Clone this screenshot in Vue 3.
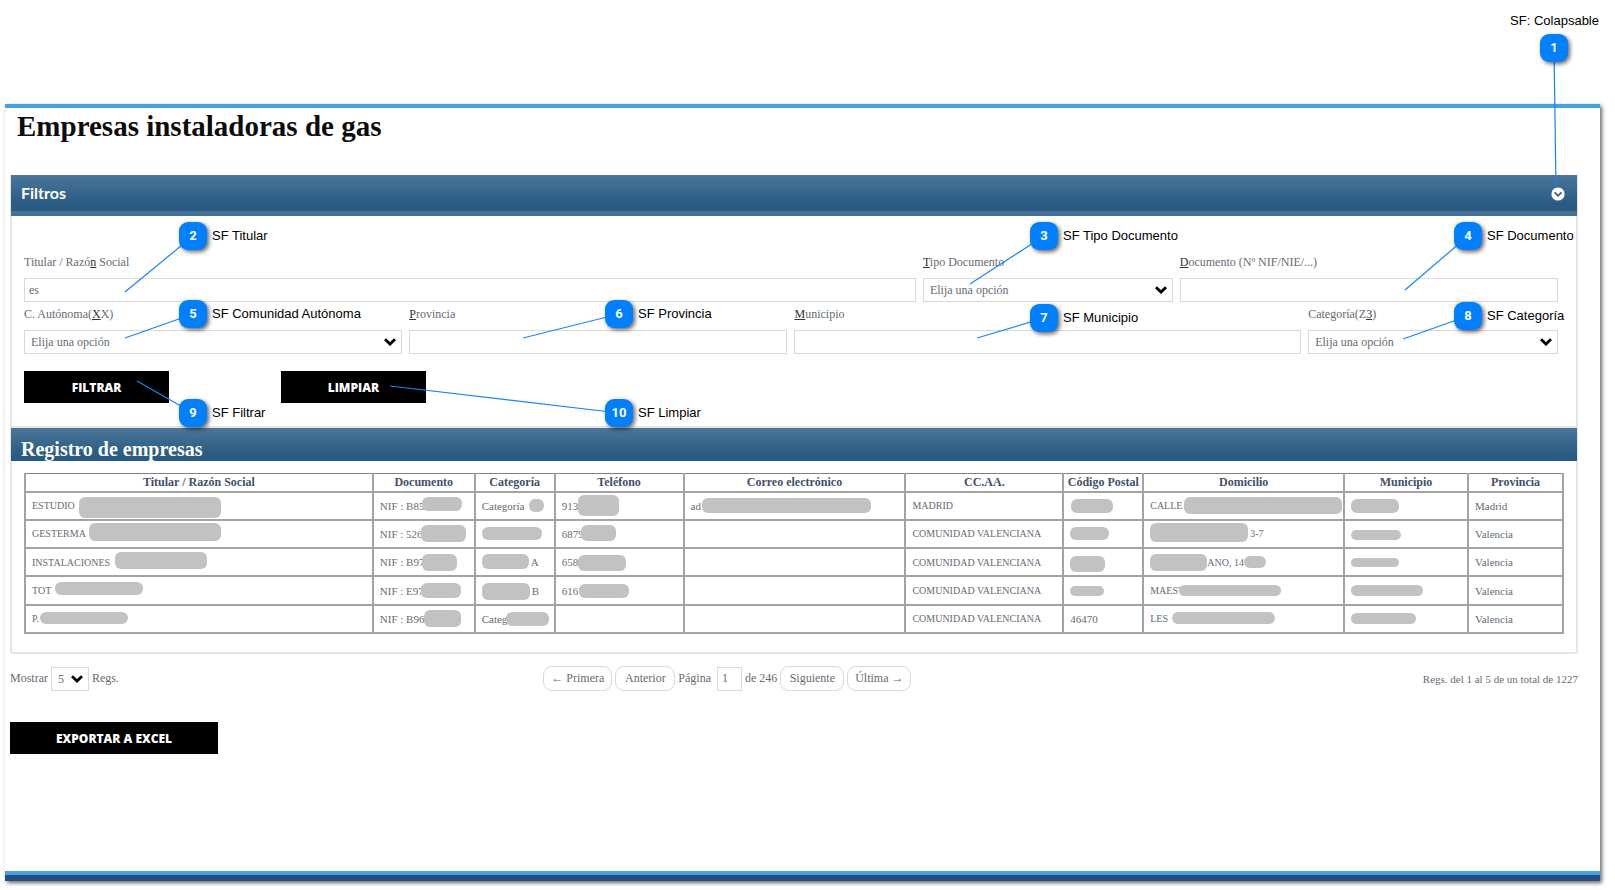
<script setup>
import { ref } from 'vue'

const titular = ref('es')
const documento = ref('')
const provincia = ref('')
const municipio = ref('')
const pagina = ref('1')

const columns = [
  { name: 'Titular / Razón Social', w: 348, caps: true },
  { name: 'Documento', w: 102 },
  { name: 'Categoría', w: 80 },
  { name: 'Teléfono', w: 129 },
  { name: 'Correo electrónico', w: 222 },
  { name: 'CC.AA.', w: 158, caps: true },
  { name: 'Código Postal', w: 80 },
  { name: 'Domicilio', w: 201, caps: true },
  { name: 'Municipio', w: 124 },
  { name: 'Provincia', w: 95 },
]
const total = columns.reduce((sum, c) => sum + c.w, 0)

// A cell is plain text, or a lead text followed by a hidden part:
// at = start of the hidden part, w/h = its size, dy = vertical shift, tail = text after it.
const m = (text, at, w, h, dy = 0, tail = '', extra = 0) => ({ text, at, w, h, dy, tail, extra })
const t = (text) => ({ text })

const rows = [
  [m('ESTUDIO', 53, 142, 21, 2), m('NIF : B85', 48, 40, 14, -2), m('Categoría', 53, 15, 13), m('913', 22, 41, 21), m('ad', 17, 169, 15), t('MADRID'), m('', 7, 42, 14), m('CALLE', 40, 158, 17), m('', 5, 48, 14), t('Madrid')],
  [m('GESTERMA', 63, 132, 18, -2), m('NIF : 526', 47, 45, 17), m('', 6, 60, 13), m('6879', 25, 35, 16, -1), t(''), t('COMUNIDAD VALENCIANA'), m('', 6, 39, 13), m('', 4, 98, 19, -1, '3-7'), m('', 6, 50, 10, 1), t('Valencia')],
  [m('INSTALACIONES', 89, 92, 17, -2), m('NIF : B971', 48, 35, 17), m('', 5, 47, 15, -1, 'A'), m('658', 22, 48, 16, 1), t(''), t('COMUNIDAD VALENCIANA'), m('', 6, 35, 16, 2), m('', 5, 57, 17, 0, 'ANO, 14', 22), m('', 5, 48, 9), t('Valencia')],
  [m('TOT', 29, 88, 13, -2), m('NIF : E97', 47, 40, 15), m('', 4, 48, 17, 1, 'B'), m('616', 23, 50, 14), t(''), t('COMUNIDAD VALENCIANA'), m('', 6, 34, 10), m('MAEST', 35, 102, 11), m('', 4, 72, 11), t('Valencia')],
  [m('P.', 14, 88, 12, -1), m('NIF : B964', 50, 37, 17), m('Categ', 30, 43, 14), t(''), t(''), t('COMUNIDAD VALENCIANA'), t('46470'), m('LES', 28, 103, 12, -1), m('', 5, 65, 11), t('Valencia')],
]

const W = 1615
const H = 890
const pct = (x) => (x / W) * 100 + '%'

// Callouts: x/y = centre of the badge, tx/ty = the point it refers to.
const callouts = [
  { n: 1, text: 'SF: Colapsable', x: 1554, y: 48, tx: 1556, ty: 188, above: true },
  { n: 2, text: 'SF Titular', x: 193, y: 236, tx: 125, ty: 292 },
  { n: 3, text: 'SF Tipo Documento', x: 1044, y: 236, tx: 970, ty: 284 },
  { n: 4, text: 'SF Documento', x: 1468, y: 236, tx: 1405, ty: 290 },
  { n: 5, text: 'SF Comunidad Autónoma', x: 193, y: 314, tx: 125, ty: 338 },
  { n: 6, text: 'SF Provincia', x: 619, y: 314, tx: 523, ty: 338 },
  { n: 7, text: 'SF Municipio', x: 1044, y: 318, tx: 977, ty: 338 },
  { n: 8, text: 'SF Categoría', x: 1468, y: 316, tx: 1403, ty: 339 },
  { n: 9, text: 'SF Filtrar', x: 193, y: 413, tx: 137, ty: 381 },
  { n: 10, text: 'SF Limpiar', x: 619, y: 413, tx: 390, ty: 386 },
]
</script>

<template>
  <div class="page">
    <main class="sheet">
      <h1>Empresas instaladoras de gas</h1>

      <section class="panel filters">
        <header class="bar bar-filters">
          <h2>Filtros</h2>
          <button type="button" class="collapse" aria-label="Colapsar filtros">
            <svg viewBox="0 0 14 14" width="14" height="14">
              <circle cx="7" cy="7" r="6.6" fill="#fff" />
              <path d="M3.6 5.4 7 8.8 10.4 5.4" fill="none" stroke="#2f6088" stroke-width="1.8" />
            </svg>
          </button>
        </header>
        <form class="form" @submit.prevent>
          <div class="field c7">
            <label for="titular">Titular / Razó<u>n</u> Social</label>
            <input id="titular" v-model="titular" type="text" />
          </div>
          <div class="field c2">
            <label for="tipo"><u>T</u>ipo Documento</label>
            <span class="select">
              <select id="tipo"><option>Elija una opción</option></select>
              <svg viewBox="0 0 12 8" width="12" height="8"><path d="M1 1.2 6 6 11 1.2" /></svg>
            </span>
          </div>
          <div class="field c3">
            <label for="documento"><u>D</u>ocumento (Nº NIF/NIE/...)</label>
            <input id="documento" v-model="documento" type="text" />
          </div>
          <div class="field c3">
            <label for="ccaa">C. Autónoma(<u>X</u>X)</label>
            <span class="select">
              <select id="ccaa"><option>Elija una opción</option></select>
              <svg viewBox="0 0 12 8" width="12" height="8"><path d="M1 1.2 6 6 11 1.2" /></svg>
            </span>
          </div>
          <div class="field c3">
            <label for="provincia"><u>P</u>rovincia</label>
            <input id="provincia" v-model="provincia" type="text" />
          </div>
          <div class="field c4">
            <label for="municipio"><u>M</u>unicipio</label>
            <input id="municipio" v-model="municipio" type="text" />
          </div>
          <div class="field c2">
            <label for="categoria">Categoría(Z<u>3</u>)</label>
            <span class="select">
              <select id="categoria"><option>Elija una opción</option></select>
              <svg viewBox="0 0 12 8" width="12" height="8"><path d="M1 1.2 6 6 11 1.2" /></svg>
            </span>
          </div>
          <div class="action c2"><button type="submit" class="black">FILTRAR</button></div>
          <div class="action c2"><button type="reset" class="black">LIMPIAR</button></div>
        </form>
      </section>

      <section class="panel results">
        <header class="bar bar-results"><h2>Registro de empresas</h2></header>
        <div class="table-box">
          <table>
            <colgroup>
              <col v-for="c in columns" :key="c.name" :style="{ width: (c.w / total) * 100 + '%' }" />
            </colgroup>
            <thead>
              <tr><th v-for="c in columns" :key="c.name" scope="col">{{ c.name }}</th></tr>
            </thead>
            <tbody>
              <tr v-for="(row, i) in rows" :key="i">
                <td v-for="(cell, j) in row" :key="j" :class="{ caps: columns[j].caps }">
                  <div class="cell">
                    <span class="lead" :style="cell.w ? { width: cell.at + 'px' } : null">{{ cell.text }}</span>
                    <span
                      v-if="cell.w"
                      class="mask"
                      :style="{ width: cell.w + 'px', height: cell.h + 'px', marginTop: cell.dy * 2 + 'px' }"
                    ></span>
                    <span v-if="cell.tail" class="tail" :class="{ tight: cell.extra }">{{ cell.tail }}</span>
                    <span v-if="cell.extra" class="mask small" :style="{ width: cell.extra + 'px' }"></span>
                  </div>
                </td>
              </tr>
            </tbody>
          </table>
        </div>
      </section>

      <div class="pager">
        <div class="page-size">
          <label for="regs">Mostrar</label>
          <span class="select mini">
            <select id="regs"><option>5</option></select>
            <svg viewBox="0 0 12 8" width="12" height="8"><path d="M1 1.2 6 6 11 1.2" /></svg>
          </span>
          <span>Regs.</span>
        </div>
        <nav class="pages" aria-label="Paginación">
          <button type="button" class="pill wide">← Primera</button>
          <button type="button" class="pill">Anterior</button>
          <label for="pagina">Página</label>
          <input id="pagina" v-model="pagina" type="text" />
          <span>de 246</span>
          <button type="button" class="pill mid">Siguiente</button>
          <button type="button" class="pill mid">Última →</button>
        </nav>
        <div class="summary">Regs. del 1 al 5 de un total de 1227</div>
      </div>

      <button type="button" class="black export">EXPORTAR A EXCEL</button>
    </main>

    <div class="callouts">
      <svg class="lines" :viewBox="`0 0 ${W} ${H}`" preserveAspectRatio="none">
        <line v-for="c in callouts" :key="c.n" :x1="c.x" :y1="c.y" :x2="c.tx" :y2="c.ty" />
      </svg>
      <div
        v-for="c in callouts"
        :key="c.n"
        class="callout"
        :class="{ above: c.above }"
        :style="{ left: pct(c.x), top: c.y + 'px' }"
      >
        <span class="badge">{{ c.n }}</span>
        <span class="note">{{ c.text }}</span>
      </div>
    </div>
  </div>
</template>

<style>
body {
  background: #fff;
}
</style>

<style scoped>
* {
  box-sizing: border-box;
}
.page {
  position: relative;
  display: flex;
  min-height: 100vh;
  padding: 104px 15px 9px 5px;
  font-family: "Liberation Serif", serif;
  font-size: 12px;
  color: #666b73;
}
.sheet {
  flex: 1;
  min-width: 0;
  padding: 0 22px 16px 5px;
  background:
    linear-gradient(#254d84, #254d84) bottom / 100% 6px no-repeat,
    linear-gradient(#45a1e0, #45a1e0) bottom / 100% 10px no-repeat,
    linear-gradient(#45a1e0, #45a1e0) top / 100% 4px no-repeat,
    #fff;
  box-shadow: 2px 2px 4px rgba(0, 0, 0, 0.6);
}
h1 {
  margin: 0;
  padding: 4px 7px 31px;
  font-size: 29px;
  line-height: 36px;
  font-weight: 700;
  color: #0c0c0c;
}
h2 {
  margin: 0;
  color: #fff;
  font-weight: 700;
}
.panel {
  border: 2px solid #e5e5e5;
  border-top: 0;
}
.results {
  border-radius: 0 0 3px 3px;
}
.bar {
  display: flex;
  align-items: center;
  justify-content: space-between;
  margin: 0 -1px;
  padding: 0 12px 0 10px;
  background: linear-gradient(#4b7699, #2a5b83 80%);
}
.bar-filters {
  height: 41px;
  border-bottom: 5px solid #457197;
}
.bar-filters h2 {
  font: 700 16px/36px Lato, sans-serif;
}
.bar-results {
  height: 33px;
}
.bar-results h2 {
  padding-top: 10px;
  font-size: 20px;
  line-height: 23px;
}
.collapse {
  display: flex;
  padding: 0;
  margin-top: 2px;
  border: 0;
  background: none;
}
.form {
  display: grid;
  grid-template-columns: repeat(12, 1fr);
  gap: 4px 7px;
  padding: 38px 18px 24px 12px;
}
.c2 { grid-column: span 2; }
.c3 { grid-column: span 3; }
.c4 { grid-column: span 4; }
.c7 { grid-column: span 7; }
.field {
  display: flex;
  flex-direction: column;
  gap: 8px;
}
.field label {
  line-height: 16px;
}
u {
  color: #333;
}
input,
select {
  width: 100%;
  height: 24px;
  margin: 0;
  padding: 0 4px;
  border: 1px solid #d9d9d9;
  border-radius: 0;
  background: #fff;
  color: #666b73;
  font: 12px "Liberation Serif", serif;
  appearance: none;
}
select {
  padding: 0 6px;
}
.select {
  position: relative;
  display: block;
}
.select svg {
  position: absolute;
  right: 6px;
  top: 8px;
  pointer-events: none;
}
.select path {
  fill: none;
  stroke: #000;
  stroke-width: 2.8;
}
.action {
  padding-top: 13px;
}
.black {
  display: block;
  width: 145px;
  height: 32px;
  padding: 0;
  border: 0;
  background: #000;
  color: #fff;
  font: 800 12px "Open Sans", sans-serif;
}
.filters .form {
  padding-bottom: 23px;
}
.table-box {
  padding: 12px 12px 18px;
}
table {
  width: 100%;
  height: 161px;
  table-layout: fixed;
  border-collapse: collapse;
}
th,
td {
  padding: 0;
  border: 2px solid #a3a3a3;
}
table,
th {
  border-top: 1px solid #808080;
}
th {
  height: 18px;
  font-size: 12px;
  line-height: 14px;
  color: #42516b;
  white-space: nowrap;
}
td {
  font-size: 11px;
}
.caps {
  font-size: 10px;
}
.cell {
  display: flex;
  align-items: center;
  height: 26px;
  white-space: nowrap;
}
.lead {
  flex: none;
  padding-left: 6px;
}
.mask {
  flex: none;
  z-index: 1;
  border-radius: 6px;
  background: #c2c2c2;
}
.mask.small {
  height: 12px;
}
.tail {
  padding-left: 2px;
}
.tail.tight {
  padding-left: 0;
}
.pager {
  display: grid;
  grid-template-columns: 4fr auto 5fr;
  align-items: center;
  padding-top: 12px;
}
.page-size,
.pages {
  display: flex;
  align-items: center;
  gap: 3px;
}
.mini {
  width: 38px;
}
.pages input {
  width: 25px;
  margin-left: 3px;
}
.pill {
  width: 60px;
  height: 25px;
  padding: 0;
  border: 1px solid #d9d9d9;
  border-radius: 9px;
  background: #fff;
  color: #666b73;
  font: 12px "Liberation Serif", serif;
}
.pill.wide {
  width: 69px;
}
.pill.mid {
  width: 64px;
}
.summary {
  font-size: 11px;
  text-align: right;
}
.export {
  width: 208px;
  margin-top: 31px;
}
.callouts {
  position: absolute;
  inset: 0;
  pointer-events: none;
}
.lines {
  position: absolute;
  left: 0;
  top: 0;
  width: 100%;
  height: 890px;
}
.lines line {
  stroke: #1785f5;
  stroke-width: 1.2;
}
.callout {
  position: absolute;
  display: flex;
  align-items: center;
  gap: 5px;
  margin: -14px 0 0 -14px;
  color: #000;
  font: 13px/16px "Liberation Sans", sans-serif;
  white-space: nowrap;
}
.badge {
  width: 28px;
  height: 28px;
  border-radius: 9px;
  background: #0080ff;
  box-shadow: 2px 2px 4px rgba(0, 0, 0, 0.6);
  color: #fff;
  font: 700 13px/28px Roboto, sans-serif;
  text-align: center;
}
.above .note {
  position: absolute;
  right: -31px;
  bottom: 33px;
}
</style>
